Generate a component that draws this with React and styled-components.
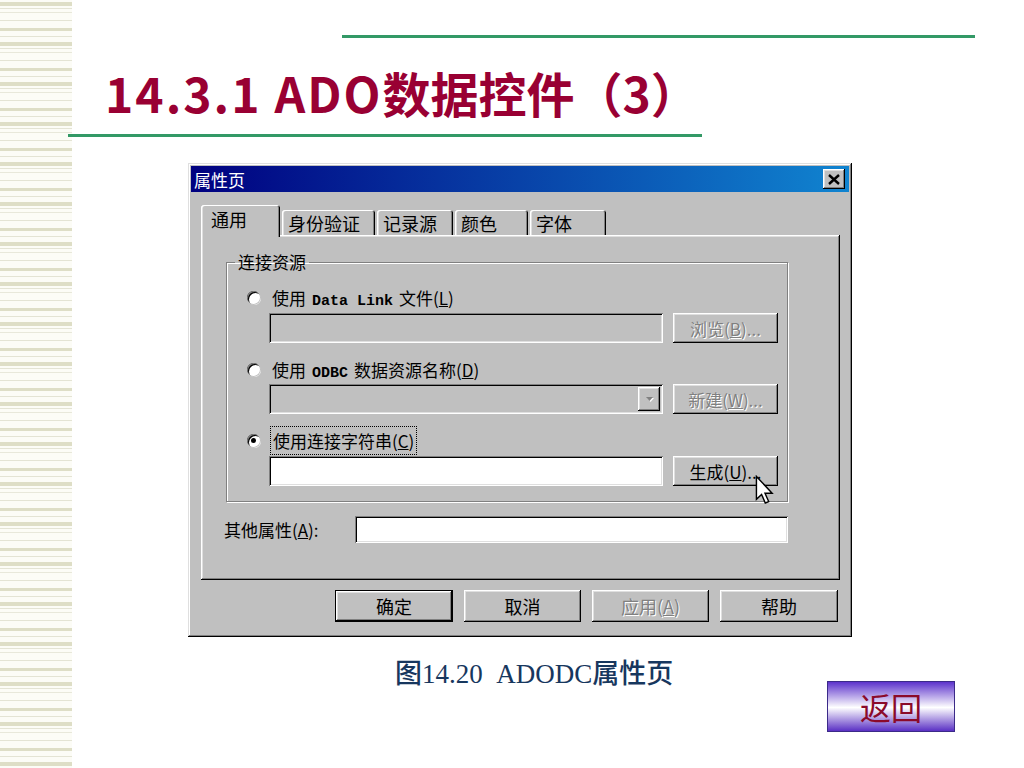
import styled, { createGlobalStyle } from "styled-components";

const GlobalStyle = createGlobalStyle`
  html, body {
    margin: 0;
    padding: 0;
    background: #fff;
  }
`;

const raised = `
  box-shadow: inset -1px -1px #000, inset 1px 1px #fff,
    inset -2px -2px #808080, inset 2px 2px #dfdfdf;
`;

const sunken = `
  box-shadow: inset 1px 1px #808080, inset -1px -1px #fff,
    inset 2px 2px #000, inset -2px -2px #dfdfdf;
`;

const Page = styled.div`
  width: 1024px;
  height: 768px;
  overflow: hidden;
  display: flex;
  flex-direction: column;
  background-color: #fff;
  background-image: repeating-linear-gradient(
    to bottom,
    #fcfcf6 0 2px,
    #dedec6 2px 6px,
    #fcfcf6 6px 8px,
    #e4e4d4 8px 9px,
    #fcfcf6 9px 12px,
    #e8e8da 12px 13px,
    #fcfcf6 13px 20px,
    #e4e4d4 20px 21px,
    #fcfcf6 21px 28px,
    #dedec6 28px 31px,
    #fcfcf6 31px 36px,
    #e4e4d4 36px 37px,
    #fcfcf6 37px 40px
  );
  background-size: 72px 100%;
  background-repeat: no-repeat;
`;

const Rule = styled.div`
  height: 3px;
  background: #339966;
  width: ${(p) => p.$width}px;
  margin-left: ${(p) => p.$left}px;
  margin-top: ${(p) => p.$top}px;
`;

const Title = styled.h1`
  margin: 26px 0 0 105px;
  height: 56px;
  line-height: 56px;
  font-family: "Noto Sans CJK SC", sans-serif;
  font-weight: 700;
  font-size: 48px;
  color: #990033;
  white-space: nowrap;
`;

const TitleNumber = styled.span`
  letter-spacing: 2px;
`;

const Dialog = styled.div`
  position: relative;
  margin: 26px 0 0 188px;
  width: 664px;
  height: 474px;
  box-sizing: border-box;
  padding: 3px;
  background: #c0c0c0;
  box-shadow: inset -1px -1px #000, inset 1px 1px #dfdfdf,
    inset -2px -2px #808080, inset 2px 2px #fff;
  display: flex;
  flex-direction: column;
  font-family: "Noto Sans CJK SC", sans-serif;
  font-size: 17px;
  color: #000;
`;

const TitleBar = styled.div`
  height: 26px;
  display: flex;
  align-items: center;
  justify-content: space-between;
  padding: 0 4px 0 3px;
  background: linear-gradient(to right, #000080, #1084d0);
  color: #fff;
  font-size: 17px;
`;

const CloseButton = styled.div`
  width: 22px;
  height: 20px;
  display: flex;
  align-items: center;
  justify-content: center;
  background: #c0c0c0;
  ${raised}
`;

const Body = styled.div`
  display: flex;
  flex-direction: column;
  padding: 13px 9px 0 10px;
`;

const TabRow = styled.div`
  display: flex;
  align-items: flex-end;
  height: 30px;
  padding-left: 2px;
  gap: 2px;
`;

const Tab = styled.div`
  position: relative;
  z-index: ${(p) => (p.$active ? 2 : 1)};
  width: ${(p) => p.$width}px;
  height: ${(p) => (p.$active ? 32 : 25)}px;
  margin-bottom: ${(p) => (p.$active ? -2 : 0)}px;
  margin-left: ${(p) => (p.$active ? -2 : 0)}px;
  box-sizing: border-box;
  padding: ${(p) => (p.$active ? "0 0 4px 10px" : "0 0 0 6px")};
  display: flex;
  align-items: center;
  font-size: 18px;
  background: #c0c0c0;
  border-radius: 3px 3px 0 0;
  box-shadow: inset 1px 1px #fff, inset 2px 0 #dfdfdf, inset -1px 0 #000,
    inset -2px 0 #808080;
`;

const Panel = styled.div`
  height: 345px;
  box-sizing: border-box;
  padding: 17px 52px 0 25px;
  background: #c0c0c0;
  ${raised}
`;

const Group = styled.fieldset`
  margin: 0;
  padding: 14px 9px 15px 20px;
  border: 1px solid #808080;
  box-shadow: inset 1px 1px #fff, 1px 1px #fff;
  display: flex;
  flex-direction: column;
`;

const Legend = styled.legend`
  margin-left: -12px;
  padding: 0 3px;
  line-height: 20px;
  font-size: 17px;
`;

const RadioRow = styled.div`
  display: flex;
  align-items: center;
  gap: 12px;
  height: 22px;
  margin-top: ${(p) => p.$top || 0}px;
  white-space: nowrap;
`;

const Radio = styled.span`
  position: relative;
  width: 13px;
  height: 13px;
  flex: none;
  border-radius: 50%;
  background: #fff;
  box-shadow: inset 1px 1px #808080, inset 2px 2px #000, 0 0 0 1px #c0c0c0,
    1px 1px 0 0 #fff;
  &::after {
    content: "";
    display: ${(p) => (p.$checked ? "block" : "none")};
    position: absolute;
    left: 4px;
    top: 4px;
    width: 5px;
    height: 5px;
    border-radius: 50%;
    background: #000;
  }
`;

const Latin = styled.span`
  font-family: "Liberation Mono", monospace;
  font-size: 15px;
  font-weight: 700;
  margin: 0 6px;
`;

const Focus = styled.span`
  outline: 1px dotted #000;
  outline-offset: 1px;
  padding: 0 1px;
`;

const FieldRow = styled.div`
  display: flex;
  gap: 10px;
  margin: ${(p) => p.$top || 5}px 0 0 22px;
`;

const Field = styled.div`
  flex: 1;
  height: ${(p) => p.$height || 30}px;
  display: flex;
  justify-content: flex-end;
  align-items: center;
  padding-right: 3px;
  background: ${(p) => (p.$disabled ? "#c0c0c0" : "#fff")};
  ${sunken}
`;

const ComboArrow = styled.div`
  width: 22px;
  height: 24px;
  display: flex;
  align-items: center;
  justify-content: center;
  background: #c0c0c0;
  ${raised}
`;

const Button = styled.div`
  width: ${(p) => p.$width}px;
  height: ${(p) => p.$height}px;
  box-sizing: border-box;
  flex: none;
  display: flex;
  align-items: center;
  justify-content: center;
  background: #c0c0c0;
  font-size: ${(p) => p.$size || 17}px;
  white-space: nowrap;
  color: ${(p) => (p.$disabled ? "#808080" : "#000")};
  text-shadow: ${(p) => (p.$disabled ? "1px 1px 0 #fff" : "none")};
  border: ${(p) => (p.$default ? "1px solid #000" : "none")};
  ${raised}
`;

const OtherRow = styled.div`
  display: flex;
  align-items: center;
  margin-top: 14px;
  height: 27px;
`;

const OtherLabel = styled.span`
  width: 131px;
  margin-left: -2px;
  white-space: nowrap;
`;

const ButtonRow = styled.div`
  display: flex;
  justify-content: flex-end;
  gap: 11px;
  margin: 10px 2px 0 0;
`;

const Pointer = styled.svg`
  position: absolute;
  left: 567px;
  top: 312px;
`;

const Footer = styled.div`
  display: flex;
  align-items: flex-start;
  margin-top: 21px;
`;

const Caption = styled.div`
  margin-left: 395px;
  line-height: 32px;
  font-family: "Liberation Serif", "Noto Sans CJK SC", serif;
  font-size: 27px;
  font-weight: 500;
  color: #17375e;
  white-space: pre;
`;

const BackButton = styled.div`
  margin: 23px 69px 0 auto;
  width: 128px;
  height: 51px;
  box-sizing: border-box;
  border: 1px solid #3b2a88;
  display: flex;
  align-items: center;
  justify-content: center;
  background: linear-gradient(to bottom, #5d33cc 0%, #ffffff 52%, #5a30c4 100%);
  font-family: "Noto Sans CJK SC", serif;
  font-size: 31px;
  color: #8b0a2a;
`;

const tabs = [
  { label: "通用", width: 79, active: true },
  { label: "身份验证", width: 93 },
  { label: "记录源", width: 76 },
  { label: "颜色", width: 73 },
  { label: "字体", width: 76 },
];

function Arrow() {
  return (
    <svg width="9" height="6" viewBox="0 0 9 6">
      <path d="M1 1h7L4.5 5z" fill="#fff" transform="translate(1 1)" />
      <path d="M1 1h7L4.5 5z" fill="#808080" />
    </svg>
  );
}

export default function App() {
  return (
    <Page>
      <GlobalStyle />
      <Rule $left={342} $width={633} $top={35} />
      <Title>
        <TitleNumber>14.3.1 ADO</TitleNumber>数据控件（3）
      </Title>
      <Rule $left={68} $width={634} $top={14} />

      <Dialog>
        <TitleBar>
          <span>属性页</span>
          <CloseButton>
            <svg width="12" height="11" viewBox="0 0 12 11">
              <path d="M1 1l10 9M11 1L1 10" stroke="#000" strokeWidth="2.4" />
            </svg>
          </CloseButton>
        </TitleBar>

        <Body>
          <TabRow>
            {tabs.map((t) => (
              <Tab key={t.label} $width={t.width} $active={t.active}>
                {t.label}
              </Tab>
            ))}
          </TabRow>

          <Panel>
            <Group>
              <Legend>连接资源</Legend>

              <RadioRow>
                <Radio />
                <span>
                  使用<Latin>Data Link</Latin>文件(<u>L</u>)
                </span>
              </RadioRow>
              <FieldRow>
                <Field $disabled />
                <Button $width={105} $height={30} $disabled>
                  浏览(<u>B</u>)...
                </Button>
              </FieldRow>

              <RadioRow $top={15}>
                <Radio />
                <span>
                  使用<Latin>ODBC</Latin>数据资源名称(<u>D</u>)
                </span>
              </RadioRow>
              <FieldRow $top={4}>
                <Field $disabled>
                  <ComboArrow>
                    <Arrow />
                  </ComboArrow>
                </Field>
                <Button $width={105} $height={30} $disabled>
                  新建(<u>W</u>)...
                </Button>
              </FieldRow>

              <RadioRow $top={15}>
                <Radio $checked />
                <Focus>
                  使用连接字符串(<u>C</u>)
                </Focus>
              </RadioRow>
              <FieldRow>
                <Field />
                <Button $width={105} $height={30}>
                  生成(<u>U</u>)...
                </Button>
              </FieldRow>
            </Group>

            <OtherRow>
              <OtherLabel>
                其他属性(<u>A</u>):
              </OtherLabel>
              <Field $height={27} />
            </OtherRow>
          </Panel>

          <ButtonRow>
            <Button $width={118} $height={32} $size={18} $default>
              确定
            </Button>
            <Button $width={117} $height={32} $size={18}>
              取消
            </Button>
            <Button $width={117} $height={32} $size={18} $disabled>
              应用(<u>A</u>)
            </Button>
            <Button $width={118} $height={32} $size={18}>
              帮助
            </Button>
          </ButtonRow>
        </Body>

        <Pointer width="20" height="30" viewBox="0 0 14 21">
          <path
            d="M1 1v16l3.6-3.4 2.6 6 2.4-1-2.6-5.8H12z"
            fill="#fff"
            stroke="#000"
            strokeWidth="1"
          />
        </Pointer>
      </Dialog>

      <Footer>
        <Caption>图14.20  ADODC属性页</Caption>
        <BackButton>返回</BackButton>
      </Footer>
    </Page>
  );
}
